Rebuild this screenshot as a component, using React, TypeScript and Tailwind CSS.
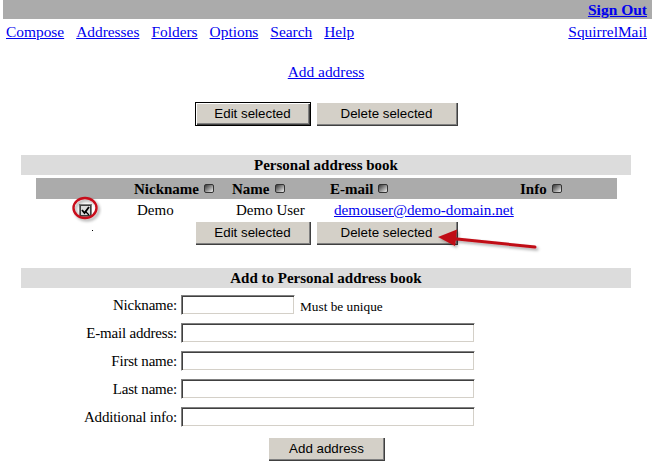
import React from "react";

const serif = "font-['Liberation_Serif','Times_New_Roman',serif]";

const Btn = ({ children, w, def }: { children: React.ReactNode; w: string; def?: boolean }) => (
  <button
    type="button"
    className={`h-[24px] ${w} bg-[#d4d0c8] font-['Liberation_Sans',Arial,sans-serif] text-[13.33px] leading-none text-black ${
      def
        ? "border border-black shadow-[inset_1px_1px_0_#fff,inset_-1px_-1px_0_#404040,inset_-2px_-2px_0_#808080]"
        : "shadow-[inset_1px_1px_0_#fff,inset_-1px_-1px_0_#404040,inset_-2px_-2px_0_#808080]"
    }`}
  >
    {children}
  </button>
);

const SortIcon = () => (
  <span className="ml-[5px] inline-block h-[9px] w-[10px] rounded-[2px] border border-[#333] bg-linear-to-br from-[#3a3a3a] to-[#f2f2f2]" />
);

const Field = ({ label, w, note }: { label: string; w: string; note?: string }) => (
  <div className="flex h-[20px] items-center">
    <div className="w-[177px] text-right leading-[18px] tracking-[-0.2px]">{label}</div>
    <input
      type="text"
      className={`ml-[4px] h-[20px] ${w} border border-[#808080] border-r-white border-b-white bg-white shadow-[inset_1px_1px_0_#404040,inset_-1px_-1px_0_#d4d0c8] outline-none`}
    />
    {note && <span className="ml-[5px] mt-[4px] text-[13.3px]">{note}</span>}
  </div>
);

const App = () => {
  const links = ["Compose", "Addresses", "Folders", "Options", "Search", "Help"];

  return (
    <div className={`relative h-[470px] w-[652px] overflow-hidden bg-white text-[15px] text-black ${serif}`}>
      {/* top bar */}
      <div className="ml-[3px] flex h-[19px] items-center justify-end bg-[#ababab] pr-[5px]">
        <a href="#" className="text-[15.5px] font-bold leading-[18px] text-[#0000ee] underline">
          Sign Out
        </a>
      </div>

      {/* menu */}
      <div className="mt-[4px] flex justify-between pl-[6px] pr-[5px] text-[15.4px] leading-[18px]">
        <div className="flex gap-[12px]">
          {links.map((l) => (
            <a key={l} href="#" className="text-[#0000ee] underline">
              {l}
            </a>
          ))}
        </div>
        <a href="#" className="text-[#0000ee] underline">
          SquirrelMail
        </a>
      </div>

      <div className="mt-[22px] text-center text-[15.4px] leading-[18px]">
        <a href="#" className="text-[#0000ee] underline">
          Add address
        </a>
      </div>

      <div className="mt-[21px] flex justify-center gap-[5px]">
        <Btn w="w-[116px]" def>
          Edit selected
        </Btn>
        <Btn w="w-[142px]">Delete selected</Btn>
      </div>

      {/* address book */}
      <div className="mx-[21px] mt-[29px] flex h-[20px] items-center justify-center bg-[#dcdcdc] font-bold leading-[18px]">
        Personal address book
      </div>

      <div className="ml-[36px] mt-[3px] grid h-[21px] w-[581px] grid-cols-[98px_98px_98px_190px_1fr] items-center bg-[#ababab] font-bold leading-[18px]">
        <div />
        <div className="flex items-center">
          Nickname
          <SortIcon />
        </div>
        <div className="flex items-center">
          Name
          <SortIcon />
        </div>
        <div className="flex items-center">
          E-mail
          <SortIcon />
        </div>
        <div className="flex items-center">
          Info
          <SortIcon />
        </div>
      </div>

      <div className="ml-[36px] grid h-[22px] w-[581px] grid-cols-[98px_98px_98px_190px_1fr] items-center leading-[18px]">
        <div className="flex justify-center">
          <svg width="13" height="13" viewBox="0 0 13 13">
            <rect x="0.5" y="0.5" width="12" height="12" fill="#e8e8e8" stroke="#808080" />
            <rect x="1.5" y="1.5" width="10" height="10" fill="#dcdcdc" stroke="#404040" strokeWidth="1" />
            <path d="M3 6 L5.5 9 L10 3" fill="none" stroke="#000" strokeWidth="1.8" />
            <path d="M6 7 L10 11" fill="none" stroke="#000" strokeWidth="1.2" />
          </svg>
        </div>
        <div className="pl-[3px]">Demo</div>
        <div className="pl-[4px]">Demo User</div>
        <div className="col-span-2 pl-[4px]">
          <a href="#" className="text-[15.2px] text-[#0000ee] underline">
            demouser@demo-domain.net
          </a>
        </div>
      </div>

      <div className="flex justify-center gap-[5px]">
        <Btn w="w-[116px]">Edit selected</Btn>
        <Btn w="w-[142px]">Delete selected</Btn>
      </div>

      {/* add form */}
      <div className="mx-[21px] mt-[23px] flex h-[20px] items-center justify-center bg-[#dcdcdc] font-bold leading-[18px]">
        Add to Personal address book
      </div>

      <div className="mt-[7px] flex flex-col gap-[8px]">
        <Field label="Nickname:" w="w-[114px]" note="Must be unique" />
        <Field label="E-mail address:" w="w-[294px]" />
        <Field label="First name:" w="w-[294px]" />
        <Field label="Last name:" w="w-[294px]" />
        <Field label="Additional info:" w="w-[294px]" />
      </div>

      <div className="mt-[10px] flex justify-center pl-[1px]">
        <Btn w="w-[117px]">Add address</Btn>
      </div>

      {/* annotations */}
      <svg className="pointer-events-none absolute left-0 top-0" width="652" height="470">
        <defs>
          <filter id="sh" x="-20%" y="-50%" width="140%" height="200%">
            <feDropShadow dx="2" dy="2" stdDeviation="1.5" floodColor="#000" floodOpacity="0.35" />
          </filter>
        </defs>
        <ellipse cx="85" cy="208" rx="11.5" ry="10" fill="none" stroke="#c8101a" strokeWidth="2.4" filter="url(#sh)" />
        <rect x="92" y="230" width="1" height="1" fill="#000" />
        <g filter="url(#sh)">
          <line x1="535" y1="247" x2="452" y2="238.5" stroke="#c00a14" strokeWidth="3" strokeLinecap="round" />
          <polygon points="438,237 457,229.5 455,246" fill="#c00a14" />
        </g>
      </svg>
    </div>
  );
};

export default App;
